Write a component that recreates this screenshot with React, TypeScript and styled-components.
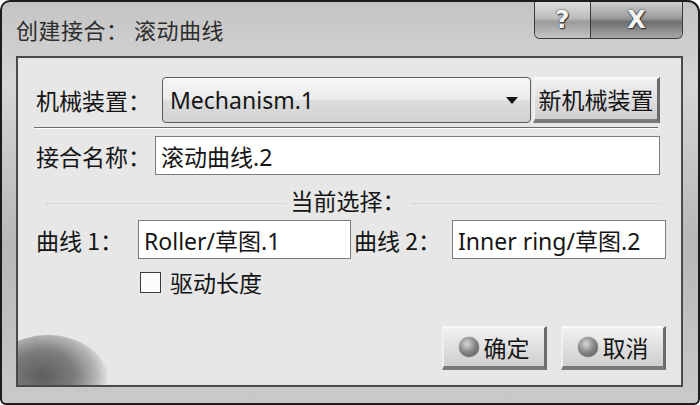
import React from 'react'
import styled, { createGlobalStyle } from 'styled-components'

const GlobalStyle = createGlobalStyle`
  html, body {
    margin: 0;
    padding: 0;
    background: #ffffff;
  }
  body {
    font-family: "Noto Sans", "Noto Sans CJK SC", sans-serif;
  }
`

const Window = styled.div`
  width: 700px;
  height: 405px;
  box-sizing: border-box;
  padding: 0 15px 16px 14px;
  display: flex;
  flex-direction: column;
  border: 2px solid #1c1c1c;
  border-radius: 10px 12px 6px 6px;
  background: linear-gradient(180deg, #c4c4c4 0%, #d6d6d6 20%, #b8b8b8 60%, #c9c9c9 100%);
  overflow: hidden;
`

const TitleBar = styled.div`
  height: 54px;
  flex: none;
  display: flex;
  justify-content: space-between;
  align-items: flex-start;
`

const Title = styled.div`
  margin-top: 11px;
  font-family: "Noto Sans CJK SC", sans-serif;
  font-size: 22px;
  color: #2e2e2e;
  letter-spacing: 0.5px;
`

const Caps = styled.div`
  display: flex;
  border: 1px solid #3a3a3a;
  border-top: none;
  border-radius: 0 0 6px 6px;
  overflow: hidden;
  height: 36px;
`

const CapButton = styled.div<{ $w: number; $dark?: boolean }>`
  width: ${(p) => p.$w}px;
  display: flex;
  align-items: center;
  justify-content: center;
  font-family: "DejaVu Sans", sans-serif;
  font-weight: bold;
  font-size: 24px;
  color: #f4f4f4;
  text-shadow: 0 0 2px #222, 1px 1px 1px #333;
  background: ${(p) =>
    p.$dark
      ? 'linear-gradient(180deg, #cfcfcf 0%, #9a9a9a 45%, #6e6e6e 55%, #a8a8a8 100%)'
      : 'linear-gradient(180deg, #dddddd 0%, #bcbcbc 45%, #9c9c9c 55%, #c4c4c4 100%)'};
  & + & {
    border-left: 1px solid #3a3a3a;
  }
`

const Client = styled.div`
  flex: 1;
  position: relative;
  border: 2px solid #4a4a4a;
  background: #e7e7e7;
  padding: 19px 21px 15px 18px;
  display: flex;
  flex-direction: column;
  font-family: "Noto Sans", "Noto Sans CJK SC", sans-serif;
  font-size: 23px;
  color: #151515;
  overflow: hidden;
`

const Glow = styled.div`
  position: absolute;
  left: -30px;
  bottom: -40px;
  width: 120px;
  height: 90px;
  border-radius: 50%;
  background: radial-gradient(ellipse at 45% 45%, #5e5e5e 0%, #7c7c7c 35%, #b4b4b4 58%, rgba(231, 231, 231, 0) 72%);
  pointer-events: none;
`

const Row = styled.div<{ $h: number; $mt?: number }>`
  display: flex;
  align-items: center;
  height: ${(p) => p.$h}px;
  margin-top: ${(p) => p.$mt ?? 0}px;
  position: relative;
`

const Label = styled.div<{ $w: number; $pl?: number }>`
  width: ${(p) => p.$w}px;
  padding-left: ${(p) => p.$pl ?? 0}px;
  box-sizing: border-box;
  flex: none;
  white-space: nowrap;
  font-family: "Noto Sans CJK SC", sans-serif;
`

const Combo = styled.div`
  width: 373px;
  margin-right: 2px;
  height: 100%;
  box-sizing: border-box;
  border: 1px solid #5c5c5c;
  border-radius: 4px;
  background: linear-gradient(180deg, #f6f6f6 0%, #ececec 48%, #dcdcdc 52%, #d2d2d2 100%);
  display: flex;
  align-items: center;
  justify-content: space-between;
  padding: 0 12px 0 7px;
  box-shadow: inset 0 1px 0 #ffffff;
`

const Arrow = styled.div`
  width: 0;
  height: 0;
  border-left: 6px solid transparent;
  border-right: 6px solid transparent;
  border-top: 7px solid #111;
`

const BevelButton = styled.div<{ $w: number }>`
  width: ${(p) => p.$w}px;
  height: 100%;
  box-sizing: border-box;
  flex: none;
  display: flex;
  align-items: center;
  justify-content: center;
  gap: 5px;
  font-family: "Noto Sans CJK SC", sans-serif;
  background: linear-gradient(180deg, #f2f2f2 0%, #dcdcdc 60%, #cfcfcf 100%);
  border-top: 2px solid #fafafa;
  border-left: 2px solid #f0f0f0;
  border-right: 3px solid #6c6c6c;
  border-bottom: 4px solid #7a7a7a;
`

const Field = styled.div<{ $w?: number }>`
  ${(p) => (p.$w ? `width: ${p.$w}px; flex: none;` : 'flex: 1;')}
  height: 100%;
  box-sizing: border-box;
  background: #ffffff;
  border: 1px solid #7c7c7c;
  display: flex;
  align-items: center;
  padding: 0 5px;
  white-space: nowrap;
  overflow: hidden;
`

const Separator = styled.div`
  height: 1px;
  margin: 4px 2px 0 -2px;
  background: #6a6a6a;
  box-shadow: 0 1px 0 #ffffff;
`

const Caption = styled.div`
  margin-top: 13px;
  height: 24px;
  position: relative;
  display: flex;
  align-items: center;
  justify-content: center;
  font-family: "Noto Sans CJK SC", sans-serif;
  &::before {
    content: '';
    position: absolute;
    left: 10px;
    right: 0;
    top: 15px;
    border-top: 1px dotted #c8c8c8;
  }
`

const CaptionText = styled.span`
  position: relative;
  background: #e7e7e7;
  padding: 0 4px;
`

const Box = styled.div`
  width: 19px;
  height: 19px;
  border: 1px solid #3c3c3c;
  background: #fbfbfb;
  margin: 0 9px 0 104px;
`

const Actions = styled.div`
  margin-top: auto;
  height: 44px;
  display: flex;
  justify-content: flex-end;
  gap: 14px;
  margin-right: -6px;
`

const Orb = styled.div`
  width: 20px;
  height: 20px;
  border-radius: 50%;
  background: radial-gradient(circle at 40% 35%, #d8d8d8 0%, #8a8a8a 45%, #4a4a4a 100%);
  box-shadow: 0 0 1px #333;
`

export default function App() {
  return (
    <>
      <GlobalStyle />
      <Window>
        <TitleBar>
          <Title>创建接合： 滚动曲线</Title>
          <Caps>
            <CapButton $w={55}>?</CapButton>
            <CapButton $w={91} $dark>
              X
            </CapButton>
          </Caps>
        </TitleBar>
        <Client>
          <Glow />
          <Row $h={46}>
            <Label $w={126}>机械装置：</Label>
            <Combo>
              <span>Mechanism.1</span>
              <Arrow />
            </Combo>
            <BevelButton $w={127}>新机械装置</BevelButton>
          </Row>
          <Separator />
          <Row $h={39} $mt={8}>
            <Label $w={119}>接合名称：</Label>
            <Field>滚动曲线.2</Field>
          </Row>
          <Caption>
            <CaptionText>当前选择：</CaptionText>
          </Caption>
          <Row $h={39} $mt={8}>
            <Label $w={102}>曲线 1：</Label>
            <Field $w={213}>Roller/草图.1</Field>
            <Label $w={101} $pl={3}>
              曲线 2：
            </Label>
            <Field $w={214}>Inner ring/草图.2</Field>
          </Row>
          <Row $h={28} $mt={9}>
            <Box />
            <Label $w={120}>驱动长度</Label>
          </Row>
          <Actions>
            <BevelButton $w={105}>
              <Orb />
              确定
            </BevelButton>
            <BevelButton $w={105}>
              <Orb />
              取消
            </BevelButton>
          </Actions>
        </Client>
      </Window>
    </>
  )
}
